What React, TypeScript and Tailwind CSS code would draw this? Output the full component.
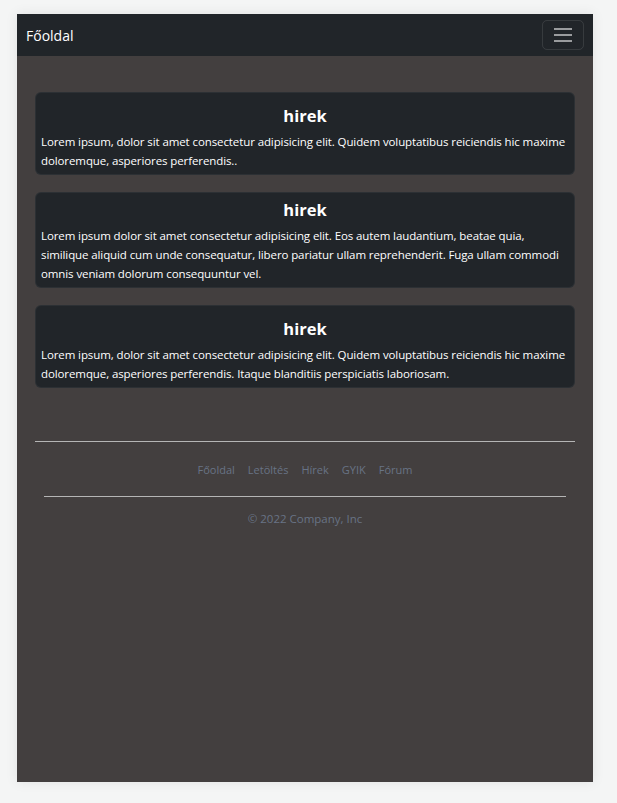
const cards = [
  {
    pt: 'pt-[11px]',
    text: 'Lorem ipsum, dolor sit amet consectetur adipisicing elit. Quidem voluptatibus reiciendis hic maxime doloremque, asperiores perferendis..',
  },
  {
    pt: 'pt-[5px]',
    text: 'Lorem ipsum dolor sit amet consectetur adipisicing elit. Eos autem laudantium, beatae quia, similique aliquid cum unde consequatur, libero pariatur ullam reprehenderit. Fuga ullam commodi omnis veniam dolorum consequuntur vel.',
  },
  {
    pt: 'pt-[11px]',
    text: 'Lorem ipsum, dolor sit amet consectetur adipisicing elit. Quidem voluptatibus reiciendis hic maxime doloremque, asperiores perferendis. Itaque blanditiis perspiciatis laboriosam.',
  },
]

const links = ['Főoldal', 'Letöltés', 'Hírek', 'GYIK', 'Fórum']

export default function App() {
  return (
    <div className="min-h-screen bg-[#f4f5f5] pt-[14px] pl-[17px] font-['Open_Sans',sans-serif]">
      <div className="w-[576px] h-[768px] bg-[#433f3f] shadow-[0_0_12px_rgba(0,0,0,0.08)] flex flex-col">
        <nav className="h-[42px] bg-[#212529] flex items-center justify-between pl-[9px] pr-[9px]">
          <a className="text-white text-[14px]">Főoldal</a>
          <button className="w-[42px] h-[30px] border border-white/10 rounded-[5px] flex items-center justify-center">
            <svg width="20" height="16" viewBox="0 0 20 16">
              <path d="M1 2h18M1 8h18M1 14h18" stroke="rgba(255,255,255,0.55)" strokeWidth="2" />
            </svg>
          </button>
        </nav>

        <main className="px-[18px] pt-[36px] flex flex-col gap-[17px]">
          {cards.map((c, i) => (
            <div key={i} className={`bg-[#212529] rounded-[6px] border border-white/5 px-[5px] pb-[4px] ${c.pt}`}>
              <h2 className="text-white text-[16.5px] font-bold text-center leading-[24px]">hirek</h2>
              <p className="text-white text-[11.5px] tracking-[-0.1px] leading-[19px] mt-[4px]">{c.text}</p>
            </div>
          ))}
        </main>

        <footer className="px-[18px] mt-[53px]">
          <div className="border-t border-[#b5b5b5]" />
          <ul className="flex justify-center gap-[13px] pt-[19px] pb-[17px]">
            {links.map((l) => (
              <li key={l} className="text-[#687385] text-[11px] leading-[18px]">{l}</li>
            ))}
          </ul>
          <div className="mx-[9px] border-t border-[#b5b5b5]" />
          <p className="text-center text-[#687385] text-[11.5px] leading-[18px] mt-[13px]">© 2022 Company, Inc</p>
        </footer>
      </div>
    </div>
  )
}
